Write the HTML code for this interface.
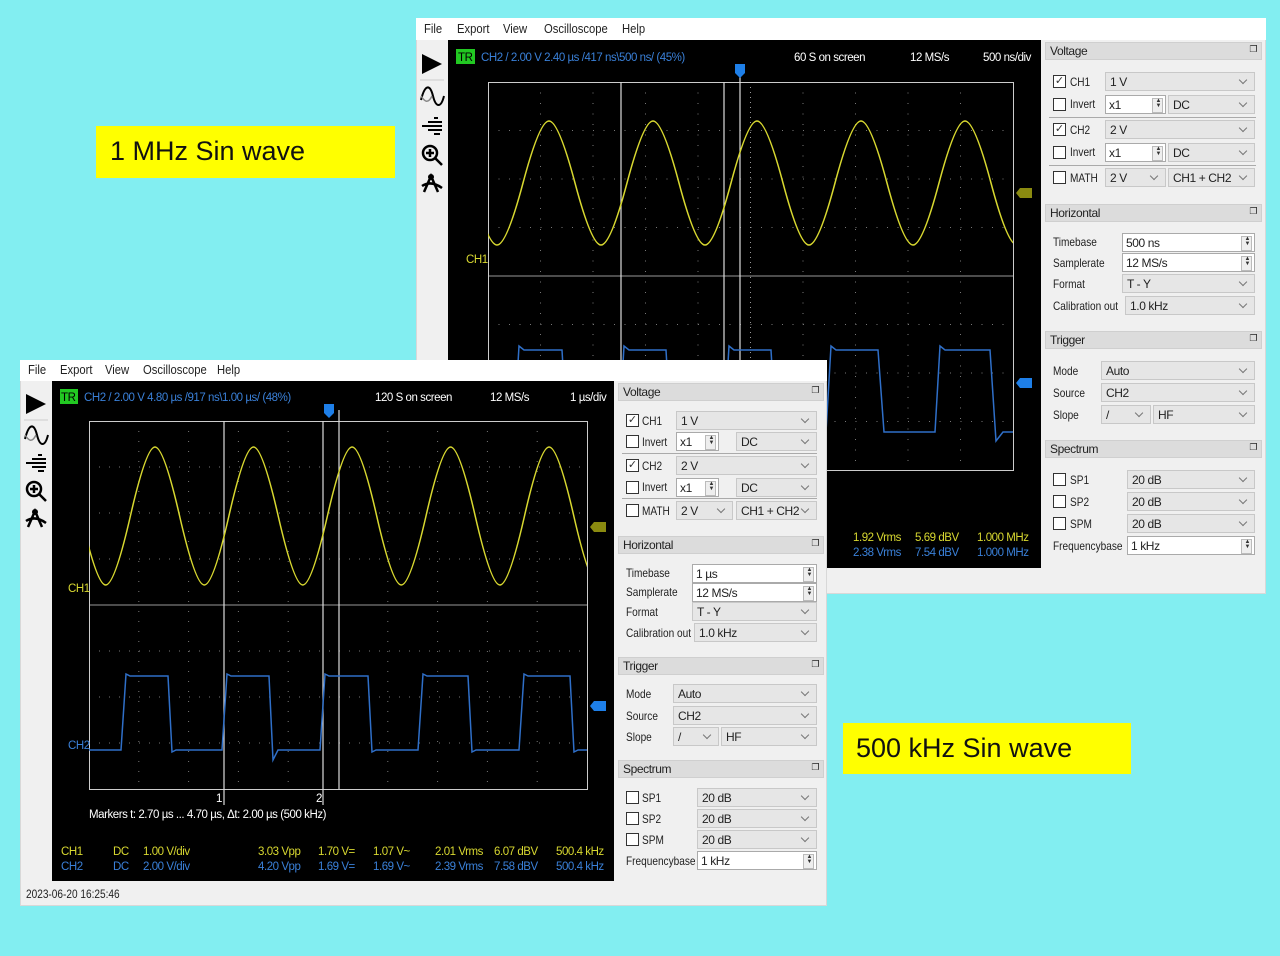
<!DOCTYPE html>
<html><head><meta charset="utf-8">
<style>
*{box-sizing:border-box;margin:0;padding:0}
body{width:1280px;height:956px;background:#82eef1;position:relative;overflow:hidden;font-family:"Liberation Sans Narrow","Liberation Sans",sans-serif;font-size:12px;color:#222}
.a{position:absolute;white-space:nowrap}
.win{position:absolute;background:#f0f0f0;border:1px solid #d8d8d8}
.blk{position:absolute;background:#000}
.hd{position:absolute;background:#dcdcdc;border:1px solid #cfcfcf;height:18px;padding:1px 0 0 4px;font-size:12px;letter-spacing:-0.4px}
.hd::after{content:"\2750";position:absolute;right:4px;top:1px;font-size:9px}
.cb{position:absolute;background:#e6e6e6;border:1px solid #c8c8c8;height:19px;padding:2px 0 0 4px;font-size:12px;letter-spacing:-0.4px}
.cb::after{content:"";position:absolute;right:8px;top:4px;width:5px;height:5px;border-right:1px solid #777;border-bottom:1px solid #777;transform:rotate(45deg)}
.sp{position:absolute;background:#fff;border:1px solid #aaa;height:19px;padding:2px 0 0 3px;font-size:12px;letter-spacing:-0.4px}
.sp::after{content:"";position:absolute;right:2px;top:2px;width:9px;height:13px;border:1px solid #bbb;background:#eee}
.sp i{position:absolute;right:4px;top:3px;font-style:normal;font-size:6px;line-height:5px;z-index:2;color:#333}
.ck{position:absolute;width:13px;height:13px;border:1px solid #333;background:#fff;font-size:11px;line-height:11px;text-align:center;color:#333}
.sep{position:absolute;height:1px;background:#aaa}
.lbl{position:absolute;white-space:nowrap;font-size:12px;transform:scaleX(.84);transform-origin:0 0}
.menu span{position:absolute;font-size:12.5px;top:4px;transform:scaleX(.9);transform-origin:0 0}
svg text{font-size:11.5px;letter-spacing:-0.45px}
</style></head><body>

<div class="a" style="left:96px;top:126px;width:299px;height:52px;background:#ffff00;font-family:'Liberation Sans',sans-serif;font-size:27px;padding:10px 0 0 14px;color:#111">1 MHz Sin wave</div>
<div class="a" style="left:843px;top:723px;width:288px;height:51px;background:#ffff00;font-family:'Liberation Sans',sans-serif;font-size:27px;padding:10px 0 0 13px;color:#111">500 kHz Sin wave</div>

<!-- ================= TOP WINDOW ================= -->
<div class="win" style="left:416px;top:18px;width:850px;height:576px;background:#f0f0f0"></div>
<div class="a" style="left:416px;top:18px;width:850px;height:22px;background:#fff"></div>
<div class="menu"><span style="left:424px;top:22px">File</span><span style="left:457px;top:22px">Export</span><span style="left:503px;top:22px">View</span><span style="left:544px;top:22px">Oscilloscope</span><span style="left:622px;top:22px">Help</span></div>
<svg class="a" style="left:416px;top:40px" width="32" height="160" viewBox="0 0 32 160">
<path d="M6 14 L26 24 L6 34 Z" fill="#000"/>
<line x1="4" y1="40" x2="28" y2="40" stroke="#ccc"/>
<path d="M5 60 C9 44 14 44 17 56 C20 68 25 68 28 56" fill="none" stroke="#000" stroke-width="2"/>
<path d="M5 56 C9 62 12 64 16 56" fill="none" stroke="#888" stroke-width="1.5"/>
<path d="M18 78h4M12 82h14M6 86h20M12 90h14M18 94h6" stroke="#000" stroke-width="2"/>
<circle cx="14" cy="113" r="7" fill="none" stroke="#000" stroke-width="2.5"/><path d="M10 113h8M14 109v8M19 118l7 7" stroke="#000" stroke-width="2.5"/>
<path d="M8 152 L15 136 L22 152 M6 146 Q15 140 26 148" fill="none" stroke="#000" stroke-width="2.5"/><circle cx="15" cy="137" r="3" fill="#000"/>
</svg>
<div class="blk" style="left:448px;top:40px;width:593px;height:528px"></div>
<svg class="a" style="left:448px;top:40px" width="593" height="528" viewBox="448 40 593 528">
<defs><clipPath id="ct"><rect x="488" y="82" width="525" height="388"/></clipPath></defs>
<g stroke="#777" stroke-width="1" stroke-dasharray="1 9.5">
<path d="M540.5 82V470M593 82V470M645.5 82V470M698 82V470M803 82V470M855.5 82V470M908 82V470M960.5 82V470"/>
<path d="M488 130.5H1013M488 179H1013M488 227.5H1013M488 324.5H1013M488 373H1013M488 421.5H1013"/>
</g>
<path d="M488 276H1013" stroke="#999"/>
<path d="M750.5 82V470" stroke="#999" stroke-dasharray="1 4"/>
<rect x="488.5" y="82.5" width="525" height="388" fill="none" stroke="#ccc"/>
<path d="M621 82V470M724 82V470M740 70V470" stroke="#ddd" stroke-width="1.2"/>
<g clip-path="url(#ct)" fill="none" stroke-width="1.5">
<path stroke="#d8d830" d="M471 183 Q487.5 245 497 245 T523 183 T549 121 T575 183 T601 245 T627 183 T653 121 T679 183 T705 245 T731 183 T757 121 T783 183 T809 245 T835 183 T861 121 T887 183 T913 245 T939 183 T965 121 T991 183 T1017 245 T1043 183"/>
<path stroke="#2f6fc8" d="M488 432 H514 L519 346 L524 350 H562 L567 436 L572 432 H619 L624 346 L629 350 H666 L671 436 L676 432 H724 L729 346 L734 350 H771 L776 436 L781 432 H826 L831 346 L836 350 H878 L884 432 H935 L940 346 L945 350 H990 L996 441 L1003 432 H1013"/>
</g>
<path d="M735 64h10v9l-5 5l-5-5z" fill="#1e7fe8"/>
<path d="M1032 188h-12l-4 5l4 5h12z" fill="#8a8a10"/>
<path d="M1032 378h-12l-4 5l4 5h12z" fill="#1e7fe8"/>
<g font-family="Liberation Sans Narrow,Liberation Sans,sans-serif">
<text x="466" y="263" fill="#d8d830">CH1</text>
<rect x="456" y="49" width="19" height="15" fill="#22c822"/>
<text x="458" y="61" fill="#000">TR</text>
<text x="481" y="61" fill="#3a80d8">CH2 / 2.00 V  2.40 µs  /417 ns\500 ns/ (45%)</text>
<g fill="#fff"><text x="794" y="61">60 S on screen</text><text x="910" y="61">12 MS/s</text><text x="983" y="61">500 ns/div</text></g>
<text x="853" y="541" fill="#d8d830">1.92 Vrms</text><text x="915" y="541" fill="#d8d830">5.69 dBV</text><text x="977" y="541" fill="#d8d830">1.000 MHz</text>
<text x="853" y="556" fill="#3a80d8">2.38 Vrms</text><text x="915" y="556" fill="#3a80d8">7.54 dBV</text><text x="977" y="556" fill="#3a80d8">1.000 MHz</text></g>
</svg>
<div class="hd" style="left:1045px;top:42px;width:217px">Voltage</div>
<div class="ck" style="left:1053px;top:75px">✓</div><div class="lbl" style="left:1070px;top:75px">CH1</div><div class="cb" style="left:1105px;top:72px;width:150px">1 V</div>
<div class="ck" style="left:1053px;top:98px"></div><div class="lbl" style="left:1070px;top:97px">Invert</div><div class="sp" style="left:1105px;top:95px;width:61px">x1<i>▲<br>▼</i></div><div class="cb" style="left:1168px;top:95px;width:87px">DC</div>
<div class="sep" style="left:1049px;top:117px;width:207px"></div>
<div class="ck" style="left:1053px;top:123px">✓</div><div class="lbl" style="left:1070px;top:123px">CH2</div><div class="cb" style="left:1105px;top:120px;width:150px">2 V</div>
<div class="ck" style="left:1053px;top:146px"></div><div class="lbl" style="left:1070px;top:145px">Invert</div><div class="sp" style="left:1105px;top:143px;width:61px">x1<i>▲<br>▼</i></div><div class="cb" style="left:1168px;top:143px;width:87px">DC</div>
<div class="sep" style="left:1049px;top:165px;width:207px"></div>
<div class="ck" style="left:1053px;top:171px"></div><div class="lbl" style="left:1070px;top:171px">MATH</div><div class="cb" style="left:1105px;top:168px;width:61px">2 V</div><div class="cb" style="left:1168px;top:168px;width:87px">CH1 + CH2</div>
<div class="hd" style="left:1045px;top:204px;width:217px">Horizontal</div>
<div class="lbl" style="left:1053px;top:235px">Timebase</div><div class="sp" style="left:1122px;top:233px;width:133px">500 ns<i>▲<br>▼</i></div>
<div class="lbl" style="left:1053px;top:256px">Samplerate</div><div class="sp" style="left:1122px;top:253px;width:133px">12 MS/s<i>▲<br>▼</i></div>
<div class="lbl" style="left:1053px;top:277px">Format</div><div class="cb" style="left:1122px;top:274px;width:133px">T - Y</div>
<div class="lbl" style="left:1053px;top:299px">Calibration out</div><div class="cb" style="left:1125px;top:296px;width:130px">1.0 kHz</div>
<div class="hd" style="left:1045px;top:331px;width:217px">Trigger</div>
<div class="lbl" style="left:1053px;top:364px">Mode</div><div class="cb" style="left:1101px;top:361px;width:154px">Auto</div>
<div class="lbl" style="left:1053px;top:386px">Source</div><div class="cb" style="left:1101px;top:383px;width:154px">CH2</div>
<div class="lbl" style="left:1053px;top:408px">Slope</div><div class="cb" style="left:1101px;top:405px;width:50px">/</div><div class="cb" style="left:1153px;top:405px;width:102px">HF</div>
<div class="hd" style="left:1045px;top:440px;width:217px">Spectrum</div>
<div class="ck" style="left:1053px;top:473px"></div><div class="lbl" style="left:1070px;top:473px">SP1</div><div class="cb" style="left:1127px;top:470px;width:128px">20 dB</div>
<div class="ck" style="left:1053px;top:495px"></div><div class="lbl" style="left:1070px;top:495px">SP2</div><div class="cb" style="left:1127px;top:492px;width:128px">20 dB</div>
<div class="ck" style="left:1053px;top:517px"></div><div class="lbl" style="left:1070px;top:517px">SPM</div><div class="cb" style="left:1127px;top:514px;width:128px">20 dB</div>
<div class="lbl" style="left:1053px;top:539px">Frequencybase</div><div class="sp" style="left:1127px;top:536px;width:128px">1 kHz<i>▲<br>▼</i></div>

<!-- ================= BOTTOM WINDOW ================= -->
<div class="win" style="left:20px;top:360px;width:807px;height:546px;background:#f0f0f0"></div>
<div class="a" style="left:20px;top:360px;width:807px;height:21px;background:#fff"></div>
<div class="menu"><span style="left:28px;top:363px">File</span><span style="left:60px;top:363px">Export</span><span style="left:105px;top:363px">View</span><span style="left:143px;top:363px">Oscilloscope</span><span style="left:217px;top:363px">Help</span></div>
<svg class="a" style="left:20px;top:381px" width="32" height="150" viewBox="0 0 32 150">
<path d="M6 13 L26 23 L6 33 Z" fill="#000"/>
<line x1="4" y1="39" x2="28" y2="39" stroke="#ccc"/>
<path d="M5 58 C9 42 14 42 17 54 C20 66 25 66 28 54" fill="none" stroke="#000" stroke-width="2"/>
<path d="M5 54 C9 60 12 62 16 54" fill="none" stroke="#888" stroke-width="1.5"/>
<path d="M18 74h4M12 78h14M6 82h20M12 86h14M18 90h6" stroke="#000" stroke-width="2"/>
<circle cx="14" cy="108" r="7" fill="none" stroke="#000" stroke-width="2.5"/><path d="M10 108h8M14 104v8M19 113l7 7" stroke="#000" stroke-width="2.5"/>
<path d="M8 146 L15 130 L22 146 M6 140 Q15 134 26 142" fill="none" stroke="#000" stroke-width="2.5"/><circle cx="15" cy="131" r="3" fill="#000"/>
</svg>
<div class="blk" style="left:52px;top:381px;width:562px;height:500px"></div>
<svg class="a" style="left:52px;top:381px" width="562" height="500" viewBox="52 381 562 500">
<defs><clipPath id="cb2"><rect x="89" y="421" width="498" height="368"/></clipPath></defs>
<g stroke="#777" stroke-width="1" stroke-dasharray="1 9">
<path d="M138.8 421V789M188.6 421V789M238.4 421V789M288.2 421V789M387.8 421V789M437.6 421V789M487.4 421V789M537.2 421V789"/>
<path d="M89 467H587M89 513H587M89 559H587M89 651H587M89 697H587M89 743H587"/>
</g>
<path d="M89 605H587" stroke="#999"/>
<rect x="89.5" y="421.5" width="498" height="368" fill="none" stroke="#ccc"/>
<path d="M224 421V805M323 421V805M339 410V789" stroke="#ddd" stroke-width="1.2"/>
<g clip-path="url(#cb2)" fill="none" stroke-width="1.5">
<path stroke="#d8d830" d="M81.1 516 Q96.8 585 105.7 585 T130.4 516 T155 447 T179.6 516 T204.3 585 T228.9 516 T253.5 447 T278.2 516 T302.8 585 T327.4 516 T352.1 447 T376.7 516 T401.3 585 T426 516 T450.6 447 T475.2 516 T499.9 585 T524.5 516 T549.1 447 T573.8 516 T598.4 585"/>
<path stroke="#2f6fc8" d="M89 750 H121 L126 674 L130 676 H168 L172 752 L176 750 H222 L227 674 L231 676 H269 L273 760 L278 750 H320 L325 674 L329 676 H368 L372 752 L376 750 H418 L423 674 L427 676 H468 L472 752 L476 750 H519 L524 674 L528 676 H570 L574 752 L578 750 H587"/>
</g>
<path d="M324 404h10v9l-5 5l-5-5z" fill="#1e7fe8"/>
<path d="M606 522h-12l-4 5l4 5h12z" fill="#8a8a10"/>
<path d="M606 701h-12l-4 5l4 5h12z" fill="#1e7fe8"/>
<g font-family="Liberation Sans Narrow,Liberation Sans,sans-serif">
<text x="68" y="592" fill="#d8d830">CH1</text><text x="68" y="749" fill="#3a80d8">CH2</text>
<text x="216" y="802" fill="#fff">1</text><text x="316" y="802" fill="#fff">2</text>
<rect x="60" y="389" width="18" height="15" fill="#22c822"/>
<text x="61" y="401" fill="#000">TR</text>
<text x="84" y="401" fill="#3a80d8">CH2 / 2.00 V  4.80 µs  /917 ns\1.00 µs/ (48%)</text>
<text x="375" y="401" fill="#fff">120 S on screen</text><text x="490" y="401" fill="#fff">12 MS/s</text><text x="570" y="401" fill="#fff">1 µs/div</text>
<text x="89" y="818" fill="#fff">Markers  t: 2.70 µs ... 4.70 µs,  Δt: 2.00 µs (500 kHz)</text>
<g fill="#d8d830"><text x="61" y="855">CH1</text><text x="113" y="855">DC</text><text x="143" y="855">1.00 V/div</text><text x="258" y="855">3.03 Vpp</text><text x="318" y="855">1.70 V=</text><text x="373" y="855">1.07 V~</text><text x="435" y="855">2.01 Vrms</text><text x="494" y="855">6.07 dBV</text><text x="556" y="855">500.4 kHz</text></g>
<g fill="#3a80d8"><text x="61" y="870">CH2</text><text x="113" y="870">DC</text><text x="143" y="870">2.00 V/div</text><text x="258" y="870">4.20 Vpp</text><text x="318" y="870">1.69 V=</text><text x="373" y="870">1.69 V~</text><text x="435" y="870">2.39 Vrms</text><text x="494" y="870">7.58 dBV</text><text x="556" y="870">500.4 kHz</text></g>
</g>
</svg>
<div class="lbl" style="left:26px;top:887px">2023-06-20 16:25:46</div>
<div class="hd" style="left:618px;top:383px;width:206px">Voltage</div>
<div class="ck" style="left:626px;top:414px">✓</div><div class="lbl" style="left:642px;top:414px">CH1</div><div class="cb" style="left:676px;top:411px;width:141px">1 V</div>
<div class="ck" style="left:626px;top:435px"></div><div class="lbl" style="left:642px;top:435px">Invert</div><div class="sp" style="left:676px;top:432px;width:43px">x1<i>▲<br>▼</i></div><div class="cb" style="left:736px;top:432px;width:81px">DC</div>
<div class="sep" style="left:622px;top:453px;width:195px"></div>
<div class="ck" style="left:626px;top:459px">✓</div><div class="lbl" style="left:642px;top:459px">CH2</div><div class="cb" style="left:676px;top:456px;width:141px">2 V</div>
<div class="ck" style="left:626px;top:481px"></div><div class="lbl" style="left:642px;top:480px">Invert</div><div class="sp" style="left:676px;top:478px;width:43px">x1<i>▲<br>▼</i></div><div class="cb" style="left:736px;top:478px;width:81px">DC</div>
<div class="sep" style="left:622px;top:498px;width:195px"></div>
<div class="ck" style="left:626px;top:504px"></div><div class="lbl" style="left:642px;top:504px">MATH</div><div class="cb" style="left:676px;top:501px;width:57px">2 V</div><div class="cb" style="left:736px;top:501px;width:81px">CH1 + CH2</div>
<div class="hd" style="left:618px;top:536px;width:206px">Horizontal</div>
<div class="lbl" style="left:626px;top:566px">Timebase</div><div class="sp" style="left:692px;top:564px;width:125px">1 µs<i>▲<br>▼</i></div>
<div class="lbl" style="left:626px;top:585px">Samplerate</div><div class="sp" style="left:692px;top:583px;width:125px">12 MS/s<i>▲<br>▼</i></div>
<div class="lbl" style="left:626px;top:605px">Format</div><div class="cb" style="left:692px;top:602px;width:125px">T - Y</div>
<div class="lbl" style="left:626px;top:626px">Calibration out</div><div class="cb" style="left:694px;top:623px;width:123px">1.0 kHz</div>
<div class="hd" style="left:618px;top:657px;width:206px">Trigger</div>
<div class="lbl" style="left:626px;top:687px">Mode</div><div class="cb" style="left:673px;top:684px;width:144px">Auto</div>
<div class="lbl" style="left:626px;top:709px">Source</div><div class="cb" style="left:673px;top:706px;width:144px">CH2</div>
<div class="lbl" style="left:626px;top:730px">Slope</div><div class="cb" style="left:673px;top:727px;width:46px">/</div><div class="cb" style="left:721px;top:727px;width:96px">HF</div>
<div class="hd" style="left:618px;top:760px;width:206px">Spectrum</div>
<div class="ck" style="left:626px;top:791px"></div><div class="lbl" style="left:642px;top:791px">SP1</div><div class="cb" style="left:697px;top:788px;width:120px">20 dB</div>
<div class="ck" style="left:626px;top:812px"></div><div class="lbl" style="left:642px;top:812px">SP2</div><div class="cb" style="left:697px;top:809px;width:120px">20 dB</div>
<div class="ck" style="left:626px;top:833px"></div><div class="lbl" style="left:642px;top:833px">SPM</div><div class="cb" style="left:697px;top:830px;width:120px">20 dB</div>
<div class="lbl" style="left:626px;top:854px">Frequencybase</div><div class="sp" style="left:697px;top:851px;width:120px">1 kHz<i>▲<br>▼</i></div>
</body></html>
